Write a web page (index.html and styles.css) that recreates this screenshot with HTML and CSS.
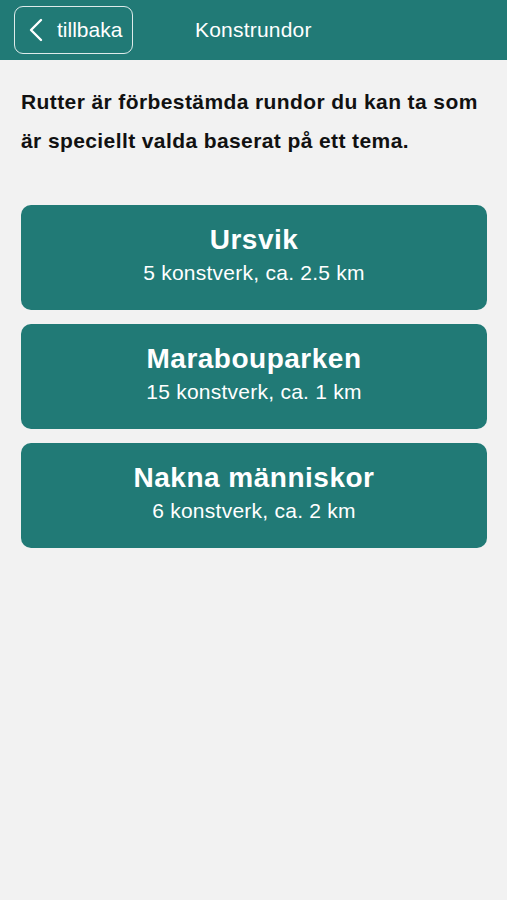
FILE: index.html
```html
<!DOCTYPE html>
<html lang="sv">
<head>
    <meta charset="UTF-8">
    <title>Konstrundor</title>
    <link rel="stylesheet" href="styles.css">
</head>
<body>

<header class="topbar">
    <a class="back" href="#">
        <svg class="chevron" width="14" height="24" viewBox="0 0 14 24">
            <path d="M12 2 L2 12 L12 22" fill="none" stroke="#fff" stroke-width="2.4" stroke-linecap="round" stroke-linejoin="round"/>
        </svg>
        <span>tillbaka</span>
    </a>
    <h1 class="title">Konstrundor</h1>
</header>

<main class="content">
    <p class="intro">Rutter är förbestämda rundor du kan ta som är speciellt valda baserat på ett tema.</p>

    <ul class="routes">
        <li class="route">
            <div class="route-name">Ursvik</div>
            <div class="route-info">5 konstverk, ca. 2.5 km</div>
        </li>
        <li class="route">
            <div class="route-name">Marabouparken</div>
            <div class="route-info">15 konstverk, ca. 1 km</div>
        </li>
        <li class="route">
            <div class="route-name">Nakna människor</div>
            <div class="route-info">6 konstverk, ca. 2 km</div>
        </li>
    </ul>
</main>

</body>
</html>
```

FILE: styles.css
```css
body {
    margin: 0;
    min-height: 100vh;
    background: #f2f2f2;
    font-family: "Liberation Sans", Arial, sans-serif;
}

.topbar {
    display: flex;
    align-items: center;
    height: 60px;
    padding: 0 14px;
    box-sizing: border-box;
    background: #217a76;
    color: #fff;
}

.back {
    display: flex;
    align-items: center;
    gap: 14px;
    width: 119px;
    height: 48px;
    padding-left: 14px;
    box-sizing: border-box;
    border: 1.5px solid rgba(255, 255, 255, 0.85);
    border-radius: 9px;
    color: #fff;
    text-decoration: none;
    font-size: 21px;
}

.title {
    margin: 0 0 0 62px;
    font-size: 21px;
    font-weight: normal;
    letter-spacing: 0.2px;
}

.content {
    padding: 22px 14px 0 21px;
}

.intro {
    margin: 0 0 45px;
    font-size: 21px;
    font-weight: bold;
    line-height: 39px;
    letter-spacing: 0.4px;
    color: #111;
}

.routes {
    display: flex;
    flex-direction: column;
    gap: 14px;
    margin: 0 6px 0 0;
    padding: 0;
    list-style: none;
}

.route {
    height: 105px;
    padding-top: 17px;
    box-sizing: border-box;
    border-radius: 10px;
    background: #217a76;
    color: #fff;
    text-align: center;
}

.route-name {
    font-size: 28px;
    font-weight: bold;
    line-height: 36px;
    letter-spacing: 0.5px;
}

.route-info {
    font-size: 21px;
    line-height: 30px;
    letter-spacing: 0.25px;
}
```
